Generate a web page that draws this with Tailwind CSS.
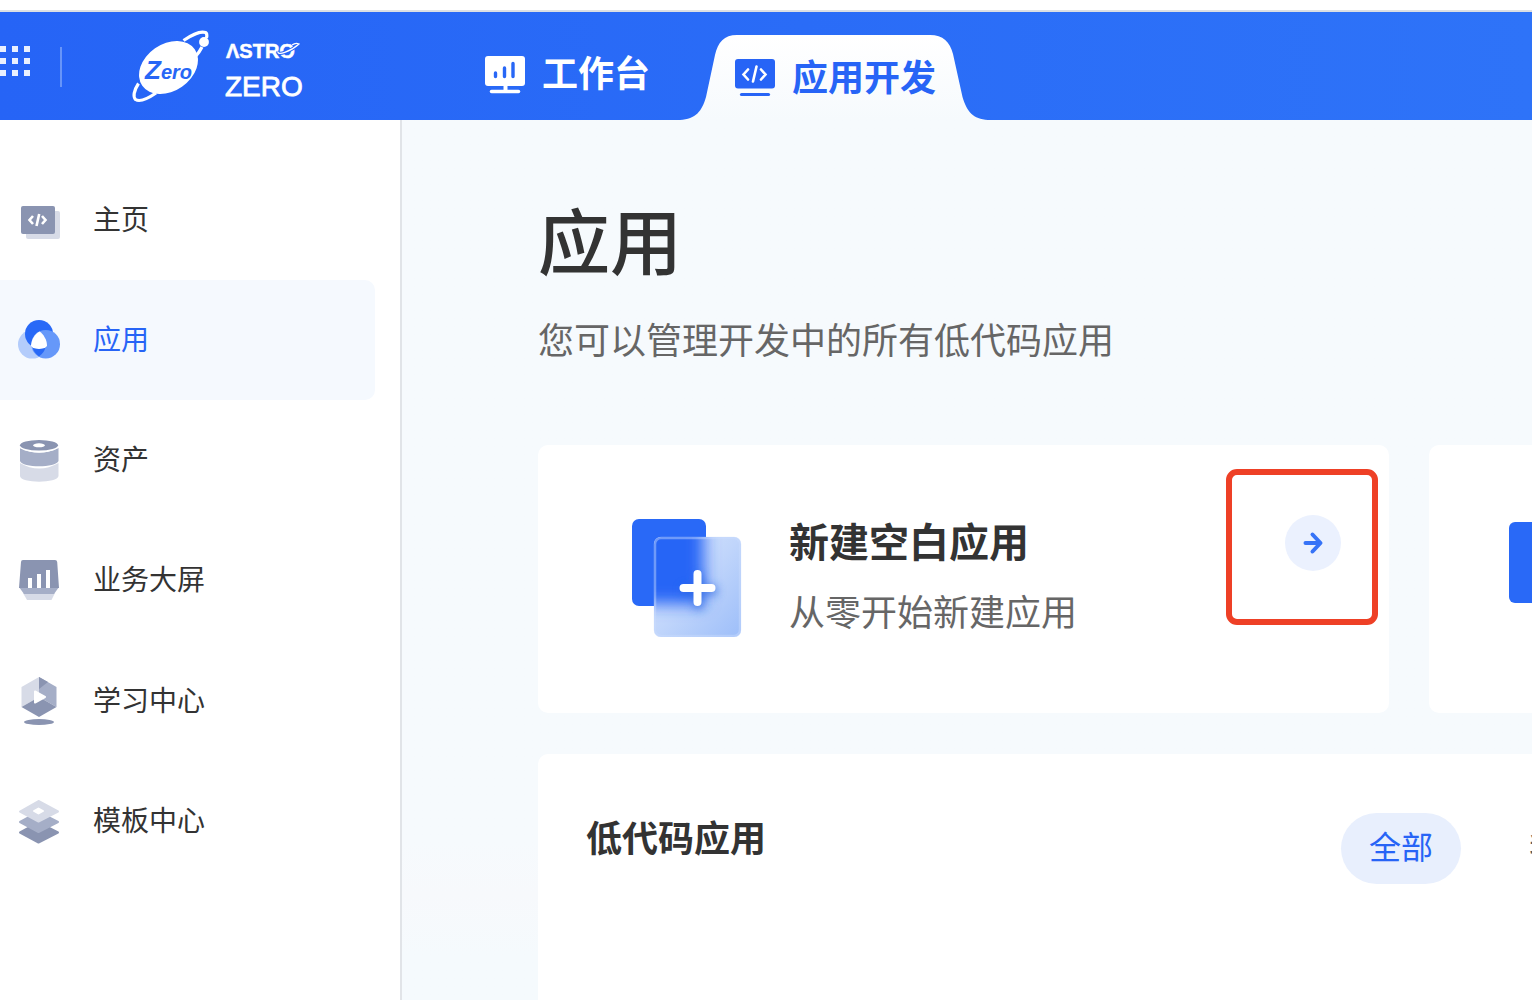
<!DOCTYPE html>
<html lang="zh-CN">
<head>
<meta charset="utf-8">
<meta name="viewport" content="width=device-width, initial-scale=1">
<title>应用开发</title>
<script src="https://cdn.jsdelivr.net/npm/@tailwindcss/browser@4"></script>
</head>
<body class="flex min-h-screen flex-col overflow-x-hidden bg-white font-['Liberation_Sans','Noto_Sans_CJK_SC',sans-serif] text-[#333333]">

<header class="mt-2.5 flex h-[110px] shrink-0 items-stretch border-t-2 border-[#dcdfe3] bg-linear-to-r from-[#2664f6] to-[#2e73f8] text-white">
  <button type="button" aria-label="服务列表" class="h-[98px] w-[30px] shrink-0">
    <svg width="30" height="30" viewBox="0 0 30 30" fill="#e9f0fe" aria-hidden="true"><path d="M0 0h6v6H0zM12 0h6v6h-6zM24 0h6v6h-6zM0 12h6v6H0zM12 12h6v6h-6zM24 12h6v6h-6zM0 24h6v6H0zM12 24h6v6h-6zM24 24h6v6h-6z"/></svg>
  </button>
  <div class="ml-[30px] mt-[35px] h-10 w-0.5 shrink-0 bg-[#6795f9]"></div>
  <a href="#" class="ml-[68px] block w-[180px] shrink-0" aria-label="Astro Zero">
    <svg width="180" height="108" viewBox="130 12 180 108" font-family="Liberation Sans, sans-serif" aria-hidden="true">
      <ellipse cx="168.500" cy="67.500" rx="32" ry="23.500" transform="rotate(-35 168.500 67.500)" fill="#fff"/>
      <g fill="none" stroke="#fff" stroke-width="3.200">
        <path d="M183.500 40.500C192 34.500 201 31 205.500 32.500Q207.500 33.500 206.500 38"/>
        <path d="M202 47Q199.500 52 195.500 56.500"/>
        <path d="M138.500 83.500C133.500 91 133 97 135.500 99.500C139.500 102 148 98.500 156 93"/>
      </g>
      <circle cx="204" cy="42" r="4.900" fill="#fff"/>
      <text x="145" y="79" fill="#2766f6" font-weight="700" font-style="italic" font-size="26">Z<tspan font-size="20">ero</tspan></text>
      <text x="226" y="57.500" fill="#fff" stroke="#fff" stroke-width=".5" font-weight="700" font-size="20">ΛSTRO</text>
      <path d="M278 51.500C277 56 290 52 299 44C297 43 294 43.500 292 45" fill="none" stroke="#2766f6" stroke-width="3.400"/>
      <path d="M278 51.500C277 56 290 52 299 44C297 43 294 43.500 292 45" fill="none" stroke="#fff" stroke-width="1.300"/>
      <text x="225" y="96" fill="#fff" stroke="#fff" stroke-width=".8" font-size="28">ZERO</text>
    </svg>
  </a>
  <nav class="ml-[175px] flex shrink-0 text-4xl">
    <a href="#" class="flex items-center gap-[17px] pt-[18px] font-bold leading-none">
      <svg width="40" height="38" viewBox="0 0 40 38" aria-hidden="true"><rect width="40" height="30" rx="3" fill="#fff"/><path d="M18.500 29h4v6h-4z" fill="#fff"/><path d="M6.500 35.500h27" stroke="#fff" stroke-width="3.500" stroke-linecap="round"/><path d="M10.500 17v3.500M19.500 12v8.500M28 7.500v13" stroke="#2867f6" stroke-width="3.400" stroke-linecap="round"/></svg>
      <span>工作台</span>
    </a>
    <a href="#" aria-current="page" class="relative ml-[30px] mt-[23px] flex w-[308px] items-center gap-[17px] pl-[55px] font-bold leading-none text-[#2764f6]">
      <svg class="absolute inset-0" width="308" height="85" viewBox="0 0 308 85" aria-hidden="true"><defs><linearGradient id="tab" x2="0" y2="1"><stop stop-color="#fff"/><stop offset="1" stop-color="#f6fafd"/></linearGradient></defs><path d="M0 85C16 84 22 76 26 62L35 20C38 7 44 0 57 0H250C263 0 270 7 273 19L282.500 62C287 77 293 84 308 85Z" fill="url(#tab)"/></svg>
      <svg class="relative" width="40" height="38" viewBox="0 0 40 38" aria-hidden="true"><rect width="40" height="29.500" rx="3" fill="#2764f6"/><path d="M6.500 35.500h27" stroke="#2764f6" stroke-width="3.200" stroke-linecap="round"/><path d="M13 10.500 8.500 15.500 13 20.500M26 10.500 30.500 15.500 26 20.500M21.500 7.500 18 22.500" fill="none" stroke="#fff" stroke-width="2.600" stroke-linecap="round"/></svg>
      <span class="relative pt-0.5">应用开发</span>
    </a>
  </nav>
</header>

<div class="flex grow">
  <aside class="w-[402px] shrink-0 border-r-2 border-[#e1e4e8] bg-white pr-[25px] pt-10">
    <nav class="text-[28px]">
      <a href="#" class="flex h-30 items-center gap-[31px] pl-4">
        <svg width="46" height="52" viewBox="16 194 46 52" aria-hidden="true"><rect x="26" y="211" width="34" height="28" rx="2" fill="#d7dbe7"/><rect x="21" y="206" width="34" height="28" rx="2" fill="#8a94b1"/><path d="M33 216 29.500 220 33 224M42 216 45.500 220 42 224M39.200 214 36.500 226" fill="none" stroke="#fff" stroke-width="2.600"/></svg>
        <span class="pt-0.5">主页</span>
      </a>
      <a href="#" aria-current="page" class="flex h-30 items-center gap-[31px] rounded-r-[10px] bg-[#f5f9fe] pl-4 text-[#2764f6]">
        <svg width="46" height="52" viewBox="16 314 46 52" aria-hidden="true"><circle cx="32.300" cy="344.300" r="14.300" fill="#b3ccfb"/><circle cx="39" cy="334" r="14" fill="#2869f7"/><circle cx="45.700" cy="344.200" r="14.300" fill="#6698f9"/><path d="M32.500 347Q39 350.500 45.500 347Q44.500 352.500 39 356.500Q33.500 352.500 32.500 347" fill="#2869f7"/><path d="M39.500 331.500C43.500 334 47 340 47 345.500Q46.500 348.500 39 349Q31.500 348.500 31 345.500C31.500 339 35 334 39.500 331.500" fill="#fff"/></svg>
        <span class="pt-0.5">应用</span>
      </a>
      <a href="#" class="flex h-30 items-center gap-[31px] pl-4">
        <svg width="46" height="52" viewBox="16 434 46 52" aria-hidden="true"><path d="M20 463Q39 474 58.500 463V476C58 483.500 20 483.500 20 476Z" fill="#d7dbe7"/><path d="M20 448Q39 457.500 58.500 448V461C56 468 22 468 20 461Z" fill="#a5aec7"/><ellipse cx="39" cy="445.500" rx="20" ry="7" fill="#fff"/><ellipse cx="39" cy="445.300" rx="19" ry="5.300" fill="#8a94b1"/><ellipse cx="39" cy="445.300" rx="6" ry="2" fill="#fff"/></svg>
        <span class="pt-0.5">资产</span>
      </a>
      <a href="#" class="flex h-30 items-center gap-[31px] pl-4">
        <svg width="46" height="52" viewBox="16 554 46 52" aria-hidden="true"><path d="M23 593H55L51.500 600H27Z" fill="#d7dbe7"/><path d="M19 587H59L54 594H24Z" fill="#a5aec7"/><path d="M23 560H55Q57 560 57.200 562L59 588H19L21 562Q21 560 23 560Z" fill="#8a94b1"/><path d="M28 578h4v10h-4zM37 574h4v14h-4zM46 570h4v18h-4z" fill="#fff"/></svg>
        <span class="pt-0.5">业务大屏</span>
      </a>
      <a href="#" class="flex h-[121px] items-center gap-[31px] pl-4">
        <svg width="46" height="52" viewBox="16 675 46 52" aria-hidden="true"><path d="M39 677V697L21.500 707V687Z" fill="#d7dbe7"/><path d="M39 677 56.500 687V707L39 697Z" fill="#a5aec7"/><path d="M39 677 48 682 39 689Z" fill="#8a94b1"/><path d="M39 697 56.500 707 39 717 21.500 707Z" fill="#8a94b1"/><path d="M35 691.500 45 697 35 702.500Z" fill="#fff" stroke="#fff" stroke-width="2" stroke-linejoin="round"/><ellipse cx="39" cy="722" rx="15" ry="3" fill="#8a94b1"/></svg>
        <span class="pt-0.5">学习中心</span>
      </a>
      <a href="#" class="flex h-30 items-center gap-[31px] pl-4">
        <svg width="46" height="52" viewBox="16 795 46 52" stroke-width="2" stroke-linejoin="round" aria-hidden="true"><path d="M20 832.500 38.500 822.500 58 832.500 38.500 842.500Z" fill="#8a94b1" stroke="#8a94b1"/><path d="M20 822 38.500 812 58 822 38.500 832Z" fill="#a5aec7" stroke="#a5aec7"/><path d="M20 811.500 38.500 801 58 811.500 38.500 821.500Z" fill="#d7dbe7" stroke="#d7dbe7"/><path d="M34 811 38.500 808.500 43 811 38.500 813.500Z" fill="#fff" stroke="#fff"/></svg>
        <span class="pt-0.5">模板中心</span>
      </a>
    </nav>
  </aside>

  <main class="flex min-w-0 grow flex-col overflow-hidden bg-linear-to-b from-[#f6fafd] from-82% via-[#f7f9fc] via-88% to-[#f5fafd] to-95% pl-[136px] pt-[76px]">
    <h1 class="text-7xl leading-24 font-medium">应用</h1>
    <p class="mt-[26px] text-4xl leading-12 text-[#666666]">您可以管理开发中的所有低代码应用</p>

    <div class="mt-[79px] flex gap-10">
      <section class="relative flex h-[268px] shrink-0 basis-[851px] items-start rounded-[10px] bg-white pl-20 pr-12 pt-17">
        <svg width="132" height="124" viewBox="618 513 132 124" class="mr-[39px] shrink-0" aria-hidden="true">
          <defs>
            <linearGradient id="glass" x2="1" y2="1"><stop stop-color="#dbe7fd"/><stop offset=".5" stop-color="#c0d5fb"/><stop offset="1" stop-color="#9dbef9"/></linearGradient>
            <clipPath id="pane"><rect x="654" y="537" width="87" height="100" rx="7"/></clipPath>
            <filter id="soft" x="-50%" y="-50%" width="200%" height="200%"><feGaussianBlur stdDeviation="8"/></filter>
            <filter id="shade" x="-50%" y="-50%" width="200%" height="200%"><feGaussianBlur stdDeviation="4"/></filter>
          </defs>
          <rect x="632" y="519" width="74" height="87" rx="7" fill="#2969f7"/>
          <g clip-path="url(#pane)">
            <rect x="654" y="537" width="87" height="100" fill="url(#glass)"/>
            <path d="M620 500H704V604H620Z" fill="#2565f6" filter="url(#soft)"/>
            <path d="M698 576h3v12h14v5h-14v14h-5v-14h-12v-5h12z" fill="#2a66e0" stroke="#2a66e0" stroke-width="5" opacity=".6" filter="url(#shade)"/>
          </g>
          <rect x="655" y="538" width="85" height="98" rx="6" fill="none" stroke="#c9dbfc" stroke-opacity=".45" stroke-width="2.500"/>
          <path d="M697.500 574v28M683.500 588h28" stroke="#fff" stroke-width="8" stroke-linecap="round"/>
        </svg>
        <div class="grow">
          <h2 class="text-[40px] leading-15 font-bold">新建空白应用</h2>
          <p class="mt-[17px] text-4xl leading-12 text-[#666666]">从零开始新建应用</p>
        </div>
        <div class="flex h-15 items-center">
          <button type="button" aria-label="新建空白应用" class="flex size-14 items-center justify-center rounded-full bg-[#ebf1fe]">
            <svg width="22" height="24" viewBox="0 0 22 24" fill="none" stroke="#3673f7" stroke-width="4" stroke-linecap="round" stroke-linejoin="round" aria-hidden="true"><path d="M3.500 12H18M10.500 3.500 18.500 12 10.500 20.500"/></svg>
          </button>
        </div>
        <div class="pointer-events-none absolute right-[11px] top-6 h-[156px] w-[152px] rounded-[11px] border-6 border-[#ee4026]"></div>
      </section>
      <section class="h-[268px] shrink-0 basis-[851px] rounded-[10px] bg-white pl-20 pt-[77px]">
        <div class="h-[81px] w-[74px] rounded-md bg-[#2969f7]"></div>
      </section>
    </div>

    <section class="mt-[41px] flex grow items-start rounded-tl-[10px] bg-white pl-12 pt-[59px]">
      <h2 class="text-4xl leading-[54px] font-bold">低代码应用</h2>
      <div class="ml-auto flex w-[191px] shrink-0 gap-10 text-[32px]">
        <button type="button" class="h-[71px] w-30 shrink-0 rounded-full bg-[#e8effd] pb-0.5 text-[#2764f6]">全部</button>
        <button type="button" class="h-[71px] shrink-0 pb-0.5 pl-7 text-[#595959]">我</button>
      </div>
    </section>
  </main>
</div>
</body>
</html>
